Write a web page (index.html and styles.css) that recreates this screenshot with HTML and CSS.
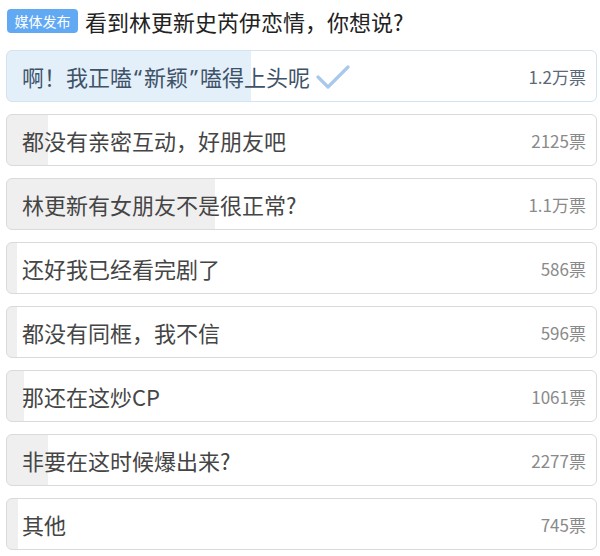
FILE: index.html
```html
<!DOCTYPE html>
<html lang="zh">
<head>
<meta charset="utf-8">
<link rel="stylesheet" href="styles.css">
</head>
<body>
<div class="poll">
  <div class="header">
    <span class="badge">媒体发布</span>
    <span class="title">看到林更新史芮伊恋情，你想说?</span>
  </div>
  <div class="options">
    <div class="option chosen" style="--p:244px">
      <span class="label">啊！我正嗑<span class="q">“</span>新颖<span class="q">”</span>嗑得上头呢</span>
      <svg class="check" width="34" height="26" viewBox="0 0 34 26"><path d="M2 13 L12 23 L32 3" fill="none" stroke="#a9c9ec" stroke-width="3.2" stroke-linecap="round" stroke-linejoin="round"/></svg>
      <span class="count">1.2万票</span>
    </div>
    <div class="option" style="--p:41px">
      <span class="label">都没有亲密互动，好朋友吧</span>
      <span class="count">2125票</span>
    </div>
    <div class="option" style="--p:208px">
      <span class="label">林更新有女朋友不是很正常?</span>
      <span class="count">1.1万票</span>
    </div>
    <div class="option" style="--p:10px">
      <span class="label">还好我已经看完剧了</span>
      <span class="count">586票</span>
    </div>
    <div class="option" style="--p:10px">
      <span class="label">都没有同框，我不信</span>
      <span class="count">596票</span>
    </div>
    <div class="option" style="--p:17px">
      <span class="label">那还在这炒CP</span>
      <span class="count">1061票</span>
    </div>
    <div class="option" style="--p:41px">
      <span class="label">非要在这时候爆出来?</span>
      <span class="count">2277票</span>
    </div>
    <div class="option" style="--p:11px">
      <span class="label">其他</span>
      <span class="count">745票</span>
    </div>
  </div>
</div>
</body>
</html>
```
FILE: styles.css
```css
* { box-sizing: border-box; }
html, body { margin: 0; padding: 0; background: #fff; }
body {
  font-family: "Noto Sans CJK SC", "Noto Sans", sans-serif;
  width: 600px;
  height: 556px;
  overflow: hidden;
}
.header {
  display: flex;
  align-items: center;
  gap: 7px;
  height: 42px;
  padding: 0 7px;
}
.badge {
  display: inline-flex;
  align-items: center;
  justify-content: center;
  width: 71px;
  height: 24px;
  background: #62a9f4;
  color: #fff;
  font-size: 14px;
  border-radius: 4px;
  line-height: 1;
}
.title {
  font-size: 22px;
  color: #222;
  line-height: 1;
}
.options {
  display: flex;
  flex-direction: column;
  gap: 12px;
  padding: 8px 3px 0 6px;
}
.option {
  display: flex;
  align-items: center;
  height: 52px;
  padding: 0 10px 0 15px;
  border: 1px solid #dadada;
  border-radius: 6px;
  background: linear-gradient(to right, #efefef var(--p), #fff var(--p));
}
.option .label {
  font-size: 22px;
  color: #454545;
  line-height: 1;
}
.option .label .q {
  font-family: "Noto Sans", "Liberation Sans", sans-serif;
  display: inline-block;
  width: 12px;
  text-align: center;
}
.option .count {
  margin-left: auto;
  font-size: 17px;
  color: #8a8a8a;
  line-height: 1;
}
.option.chosen {
  border-color: #d3e3ef;
  background: linear-gradient(to right, #e3eff9 var(--p), #fff var(--p));
}
.option.chosen .label { color: #3e5268; }
.option.chosen .count { color: #5b6878; }
.check { margin-left: 6px; margin-top: 2px; }
```
